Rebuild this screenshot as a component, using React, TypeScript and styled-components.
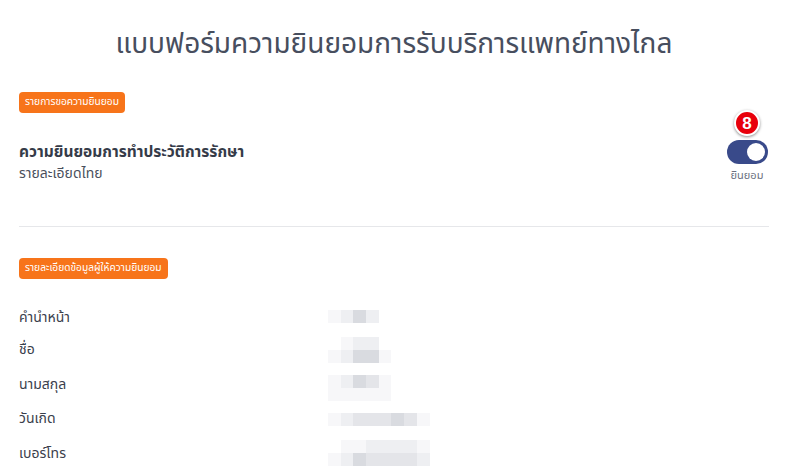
import React from "react";
import styled, { createGlobalStyle } from "styled-components";

const Global = createGlobalStyle`
  html, body { margin: 0; padding: 0; background: #ffffff; }
  body { font-family: "Noto Sans Thai", "Noto Sans", "Open Sans", sans-serif; color: #3b4150; }
`;

const Page = styled.div`
  width: 800px;
  height: 473px;
  overflow: hidden;
  box-sizing: border-box;
  padding: 0 31px 0 19px;
`;

const Title = styled.h1`
  margin: 0;
  padding-top: 27px;
  height: 64px;
  box-sizing: border-box;
  text-align: center;
  font-size: 28px;
  font-weight: 400;
  color: #474e5e;
  line-height: 36px;
`;

const Badge = styled.div`
  display: flex;
  width: fit-content;
  align-items: center;
  height: 21px;
  padding: 0 6px;
  border-radius: 4px;
  background: #f7741a;
  color: #ffffff;
  font-size: 10.2px;
  line-height: 1;
`;

const Section = styled.section<{ $top: number }>`
  padding-top: ${(p) => p.$top}px;
`;

const ConsentRow = styled.div`
  display: flex;
  align-items: flex-start;
  justify-content: space-between;
  margin-top: -3px;
`;

const ConsentText = styled.div`
  padding-top: 32px;
`;

const ConsentTitle = styled.div`
  font-size: 15.5px;
  font-weight: 700;
  color: #353b48;
  line-height: 22px;
`;

const ConsentSub = styled.div`
  font-size: 14px;
  color: #4a505c;
  line-height: 20px;
`;

const ToggleCol = styled.div`
  display: flex;
  flex-direction: column;
  align-items: center;
  width: 44px;
`;

const Counter = styled.div`
  width: 22px;
  height: 22px;
  border-radius: 50%;
  background: #e8000b;
  border: 2px solid #ffffff;
  box-shadow: 0 1px 3px rgba(0, 0, 0, 0.45);
  color: #fff;
  font-family: "Liberation Sans", Arial, sans-serif;
  font-weight: 700;
  font-size: 17px;
  line-height: 1;
  display: flex;
  align-items: center;
  justify-content: center;
  margin-bottom: 4px;
`;

const Switch = styled.div`
  width: 41px;
  height: 24px;
  border-radius: 12px;
  background: #394a8a;
  display: flex;
  align-items: center;
  justify-content: flex-end;
  padding: 0 3px;
  box-sizing: border-box;
`;

const Knob = styled.div`
  width: 18px;
  height: 18px;
  border-radius: 50%;
  background: #ffffff;
`;

const ToggleLabel = styled.div`
  margin-top: 4px;
  font-size: 11px;
  color: #6b7180;
  line-height: 16px;
`;

const Divider = styled.hr`
  border: 0;
  border-top: 1px solid #e6e7ea;
  margin: 42px 0 0 0;
`;

const Fields = styled.div`
  display: flex;
  flex-direction: column;
  margin-top: 29px;
`;

const FieldRow = styled.div<{ $h: number }>`
  display: flex;
  align-items: flex-start;
  height: ${(p) => p.$h}px;
`;

const Label = styled.div`
  width: 309px;
  font-size: 14px;
  color: #3a404c;
  line-height: 20px;
`;

const Blur = styled.div<{ $top: number }>`
  display: grid;
  grid-auto-flow: row;
  margin-top: ${(p) => p.$top}px;
`;

const BlurLine = styled.div`
  display: flex;
`;

const Cell = styled.div`
  width: 12.7px;
  height: 13px;
`;

type Field = { label: string; h: number; top: number; rows: string[][] };

const F = "#f7f7f9";
const L = "#eeeff2";
const M = "#e4e5e9";
const D = "#d9dbe0";
const W = "transparent";

const fields: Field[] = [
  { label: "คำนำหน้า", h: 32, top: 2, rows: [[F, L, D, L]] },
  {
    label: "ชื่อ",
    h: 35,
    top: -3,
    rows: [
      [W, F, L, L, W],
      [F, L, D, D, F],
    ],
  },
  {
    label: "นามสกุล",
    h: 34,
    top: 0,
    rows: [
      [F, L, D, M, F],
      [F, F, F, F, F],
    ],
  },
  { label: "วันเกิด", h: 35, top: 4, rows: [[F, L, M, M, M, D, M, F]] },
  {
    label: "เบอร์โทร",
    h: 40,
    top: -4,
    rows: [
      [W, F, F, L, L, L, L, F],
      [F, L, D, M, M, M, M, L],
    ],
  },
];

export default function App() {
  return (
    <Page>
      <Global />
      <Title>แบบฟอร์มความยินยอมการรับบริการแพทย์ทางไกล</Title>
      <Section $top={28}>
        <Badge>รายการขอความยินยอม</Badge>
        <ConsentRow>
          <ConsentText>
            <ConsentTitle>ความยินยอมการทำประวัติการรักษา</ConsentTitle>
            <ConsentSub>รายละเอียดไทย</ConsentSub>
          </ConsentText>
          <ToggleCol>
            <Counter>8</Counter>
            <Switch>
              <Knob />
            </Switch>
            <ToggleLabel>ยินยอม</ToggleLabel>
          </ToggleCol>
        </ConsentRow>
      </Section>
      <Divider />
      <Section $top={31}>
        <Badge>รายละเอียดข้อมูลผู้ให้ความยินยอม</Badge>
        <Fields>
          {fields.map((f) => (
            <FieldRow key={f.label} $h={f.h}>
              <Label>{f.label}</Label>
              <Blur $top={f.top}>
                {f.rows.map((r, i) => (
                  <BlurLine key={i}>
                    {r.map((c, j) => (
                      <Cell key={j} style={{ background: c }} />
                    ))}
                  </BlurLine>
                ))}
              </Blur>
            </FieldRow>
          ))}
        </Fields>
      </Section>
    </Page>
  );
}
